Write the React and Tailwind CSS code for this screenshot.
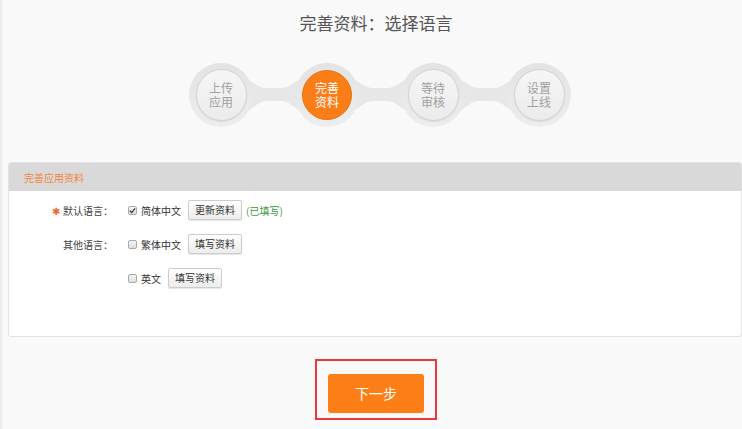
import React from 'react';

const steps = [
  { top: '上传', bottom: '应用', active: false },
  { top: '完善', bottom: '资料', active: true },
  { top: '等待', bottom: '审核', active: false },
  { top: '设置', bottom: '上线', active: false },
];

const Step = ({ step }) => (
  <div className="relative z-10 w-16 h-16 rounded-full bg-gradient-to-b from-[#e3e3e3] to-[#ededed] flex items-center justify-center shrink-0">
    {step.active ? (
      <div className="w-[50px] h-[50px] rounded-full bg-[#fb7d17] border border-[#e97312] flex flex-col items-center justify-center text-white text-[12px] leading-[14px]">
        <span>{step.top}</span>
        <span>{step.bottom}</span>
      </div>
    ) : (
      <div className="w-[51px] h-[52px] rounded-full bg-gradient-to-b from-[#f6f6f6] to-[#ebebeb] border border-[#d2d2d2] shadow-[0_1px_1px_rgba(0,0,0,0.08)] flex flex-col items-center justify-center text-[#a0a0a0] text-[12px] leading-[14px]">
        <span>{step.top}</span>
        <span>{step.bottom}</span>
      </div>
    )}
  </div>
);

// bar between two step circles, with soft concave joins
const Connector = () => (
  <svg width="42" height="64" viewBox="0 0 42 64" className="shrink-0 overflow-visible">
    <path
      d="M-6 16 C2 20 6 25 14 25 L28 25 C36 25 40 20 48 16 L48 48 C40 44 36 38 28 38 L14 38 C6 38 2 44 -6 48 Z"
      fill="#e7e7e7"
    />
  </svg>
);

const Checkbox = ({ checked }) => (
  <span className="w-[9px] h-[9px] rounded-[2px] border border-[#a9a9a9] bg-gradient-to-b from-[#f4f4f4] to-[#dedede] flex items-center justify-center shrink-0">
    {checked && (
      <svg width="7" height="7" viewBox="0 0 8 8">
        <path d="M1 4.2 L3.1 6.3 L7 1.5" fill="none" stroke="#333" strokeWidth="1.4" />
      </svg>
    )}
  </span>
);

const SmallButton = ({ children }) => (
  <button className="h-5 px-[6px] text-[10px] leading-none text-[#333] border border-[#cccccc] rounded-[2px] bg-gradient-to-b from-[#ffffff] to-[#ececec] shadow-[0_1px_1px_rgba(0,0,0,0.1)]">
    {children}
  </button>
);

export default function App() {
  return (
    <div
      className="min-h-[429px] bg-[#f9f9f9] border-l-2 border-[#ececec] pl-[8px]"
      style={{ fontFamily: '"Noto Sans CJK SC", "Noto Sans", sans-serif' }}
    >
      {/* title */}
      <div className="pt-[11px] h-9 text-center text-[17px] leading-6 text-[#555]">
        完善资料：选择语言
      </div>

      {/* steps */}
      <div className="mt-[27px] flex justify-center pl-[8px]">
        <div className="flex items-center">
          <Step step={steps[0]} />
          <Connector />
          <Step step={steps[1]} />
          <Connector />
          <Step step={steps[2]} />
          <Connector />
          <Step step={steps[3]} />
        </div>
      </div>

      {/* card */}
      <div className="mt-[35px] ml-[-2px] bg-white border border-[#e2e2e2] rounded-[3px] overflow-hidden">
        <div className="h-[28px] bg-[#d9d9d9] pl-[15px] flex items-center text-[10px] text-[#f4843f]">
          完善应用资料
        </div>
        <div className="pt-[9px] pb-[48px] flex flex-col gap-[14px] text-[10px] text-[#333]">
          <div className="flex items-center h-5">
            <div className="w-[105px] text-right pr-[1px] text-[#444]">
              <span className="text-[#f4642b] mr-[3px]">✱</span>默认语言：
            </div>
            <div className="ml-[14px] flex items-center">
              <Checkbox checked />
              <span className="ml-[4px] mr-[7px]">简体中文</span>
              <SmallButton>更新资料</SmallButton>
              <span className="ml-[4px] text-[#3c9a3c]">(已填写)</span>
            </div>
          </div>
          <div className="flex items-center h-5">
            <div className="w-[105px] text-right pr-[1px] text-[#444]">其他语言：</div>
            <div className="ml-[14px] flex items-center">
              <Checkbox />
              <span className="ml-[4px] mr-[7px]">繁体中文</span>
              <SmallButton>填写资料</SmallButton>
            </div>
          </div>
          <div className="flex items-center h-5">
            <div className="w-[105px]" />
            <div className="ml-[14px] flex items-center">
              <Checkbox />
              <span className="ml-[4px] mr-[7px]">英文</span>
              <SmallButton>填写资料</SmallButton>
            </div>
          </div>
        </div>
      </div>

      {/* next */}
      <div className="mt-[22px] flex justify-center">
        <div className="border-2 border-[#f0363b] px-[11px] pt-[13px] pb-[5px]">
          <button className="w-24 h-[39px] rounded-[3px] bg-[#fb7e17] text-white text-[14px]">
            下一步
          </button>
        </div>
      </div>
    </div>
  );
}
